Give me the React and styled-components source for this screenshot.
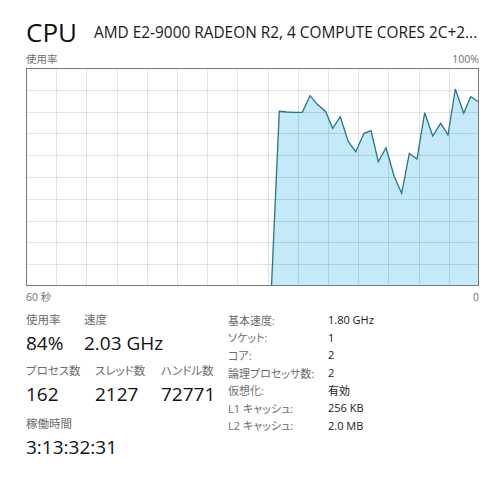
import React from 'react';
import styled, { createGlobalStyle } from 'styled-components';

const GlobalStyle = createGlobalStyle`
  html, body {
    margin: 0;
    padding: 0;
    background: #ffffff;
  }
  body {
    font-family: "Open Sans", "Noto Sans CJK JP", sans-serif;
    color: #1a1a1a;
  }
`;

const CHART_W = 453;
const CHART_H = 218;
const COLS = 15;
const ROWS = 10;

// 直近の使用率サンプル (チャート座標)
const samples = [
  [245.5, 218],
  [253.3, 43.3],
  [261, 44],
  [268.6, 44.3],
  [276.3, 44.3],
  [284, 27.7],
  [291.3, 36.3],
  [299.7, 43.7],
  [306.7, 60.3],
  [314.3, 48.7],
  [322.3, 73.7],
  [329.7, 83.7],
  [338, 65.3],
  [345, 62.7],
  [352.3, 93.7],
  [360, 79.7],
  [368.3, 108.7],
  [375.7, 125.3],
  [383.3, 85.3],
  [391, 91],
  [398.7, 44.7],
  [406.7, 68],
  [414.7, 55.3],
  [422, 67],
  [429.3, 21],
  [437.7, 45.3],
  [444.7, 28.7],
  [452.3, 33.7],
  [453, 34],
];

const leftStats = [
  [
    { label: '使用率', value: '84%', width: 58 },
    { label: '速度', value: '2.03 GHz' },
  ],
  [
    { label: 'プロセス数', value: '162', width: 69 },
    { label: 'スレッド数', value: '2127', width: 66 },
    { label: 'ハンドル数', value: '72771' },
  ],
  [{ label: '稼働時間', value: '3:13:32:31' }],
];

const specs = [
  ['基本速度:', '1.80 GHz'],
  ['ソケット:', '1'],
  ['コア:', '2'],
  ['論理プロセッサ数:', '2'],
  ['仮想化:', '有効'],
  ['L1 キャッシュ:', '256 KB'],
  ['L2 キャッシュ:', '2.0 MB'],
];

const UsageChart = () => {
  const line = samples.map(([x, y]) => `${x},${y}`).join(' ');
  const area = `0,${CHART_H} ${line} ${CHART_W},${CHART_H}`;
  const cw = CHART_W / COLS;
  const rh = CHART_H / ROWS;

  return (
    <ChartBox>
      <svg width={CHART_W} height={CHART_H} viewBox={`0 0 ${CHART_W} ${CHART_H}`}>
        <polygon points={area} fill="#c4e9f8" />
        {Array.from({ length: COLS - 1 }, (_, i) => (
          <line
            key={`v${i}`}
            x1={Math.round(cw * (i + 1)) + 0.5}
            x2={Math.round(cw * (i + 1)) + 0.5}
            y1={0}
            y2={CHART_H}
            stroke="rgba(0,0,0,0.11)"
          />
        ))}
        {Array.from({ length: ROWS - 1 }, (_, i) => (
          <line
            key={`h${i}`}
            x1={0}
            x2={CHART_W}
            y1={Math.round(rh * (i + 1)) + 0.5}
            y2={Math.round(rh * (i + 1)) + 0.5}
            stroke="rgba(0,0,0,0.11)"
          />
        ))}
        <polyline points={line} fill="none" stroke="#277589" strokeWidth="1.3" />
        <rect
          x={0.5}
          y={0.5}
          width={CHART_W - 1}
          height={CHART_H - 1}
          fill="none"
          stroke="#7a7a7a"
        />
      </svg>
    </ChartBox>
  );
};

const App = () => {
  return (
    <>
      <GlobalStyle />
      <Page>
        <Header>
          <Heading>CPU</Heading>
          <Model>AMD E2-9000 RADEON R2, 4 COMPUTE CORES 2C+2...</Model>
        </Header>
        <AxisRow>
          <span>使用率</span>
          <span>100%</span>
        </AxisRow>
        <UsageChart />
        <AxisRow bottom>
          <span>60 秒</span>
          <span>0</span>
        </AxisRow>
        <Details>
          <LeftPanel>
            {leftStats.map((group, gi) => (
              <StatRow key={gi} spaced={gi === 2}>
                {group.map((stat) => (
                  <Stat key={stat.label} width={stat.width}>
                    <StatLabel>{stat.label}</StatLabel>
                    <StatValue>{stat.value}</StatValue>
                  </Stat>
                ))}
              </StatRow>
            ))}
          </LeftPanel>
          <SpecTable>
            {specs.map(([k, v]) => (
              <React.Fragment key={k}>
                <SpecKey>{k}</SpecKey>
                <SpecValue>{v}</SpecValue>
              </React.Fragment>
            ))}
          </SpecTable>
        </Details>
      </Page>
    </>
  );
};

const Page = styled.div`
  width: 499px;
  box-sizing: border-box;
  padding: 0 20px 0 26px;
`;

const Header = styled.div`
  height: 52px;
  box-sizing: border-box;
  display: flex;
  align-items: flex-start;
  gap: 17px;
`;

const Heading = styled.h1`
  margin: 19px 0 0;
  font-size: 26px;
  font-weight: 400;
  line-height: 26px;
  color: #111;
  flex-shrink: 0;
`;

const Model = styled.div`
  margin-top: 23px;
  flex: 1;
  min-width: 0;
  font-size: 15.4px;
  line-height: 20px;
  color: #1a1a1a;
  white-space: nowrap;
`;

const AxisRow = styled.div`
  display: flex;
  justify-content: space-between;
  height: 14px;
  line-height: 14px;
  font-size: 10.5px;
  color: #707070;
  margin-top: ${(p) => (p.bottom ? '4px' : '0')};
`;

const ChartBox = styled.div`
  margin-top: 2px;
  height: ${CHART_H}px;

  svg {
    display: block;
  }
`;

const Details = styled.div`
  display: flex;
  margin-top: 7px;
`;

const LeftPanel = styled.div`
  width: 202px;
  display: flex;
  flex-direction: column;
  gap: 5px;
`;

const StatRow = styled.div`
  display: flex;
  margin-top: ${(p) => (p.spaced ? '2px' : '0')};
`;

const Stat = styled.div`
  width: ${(p) => (p.width ? `${p.width}px` : 'auto')};
  flex-shrink: 0;
  display: flex;
  flex-direction: column;
`;

const StatLabel = styled.div`
  font-size: 11.5px;
  line-height: 18px;
  color: #6d6d6d;
  white-space: nowrap;
  font-feature-settings: "palt";
`;

const StatValue = styled.div`
  font-size: 19px;
  line-height: 28px;
  color: #111;
  white-space: nowrap;
`;

const SpecTable = styled.div`
  display: grid;
  grid-template-columns: 100px auto;
  grid-auto-rows: 17.6px;
  align-items: center;
  font-size: 11px;
`;

const SpecKey = styled.div`
  color: #6d6d6d;
  white-space: nowrap;
  font-feature-settings: "palt";
`;

const SpecValue = styled.div`
  color: #1a1a1a;
  white-space: nowrap;
`;

export default App;
